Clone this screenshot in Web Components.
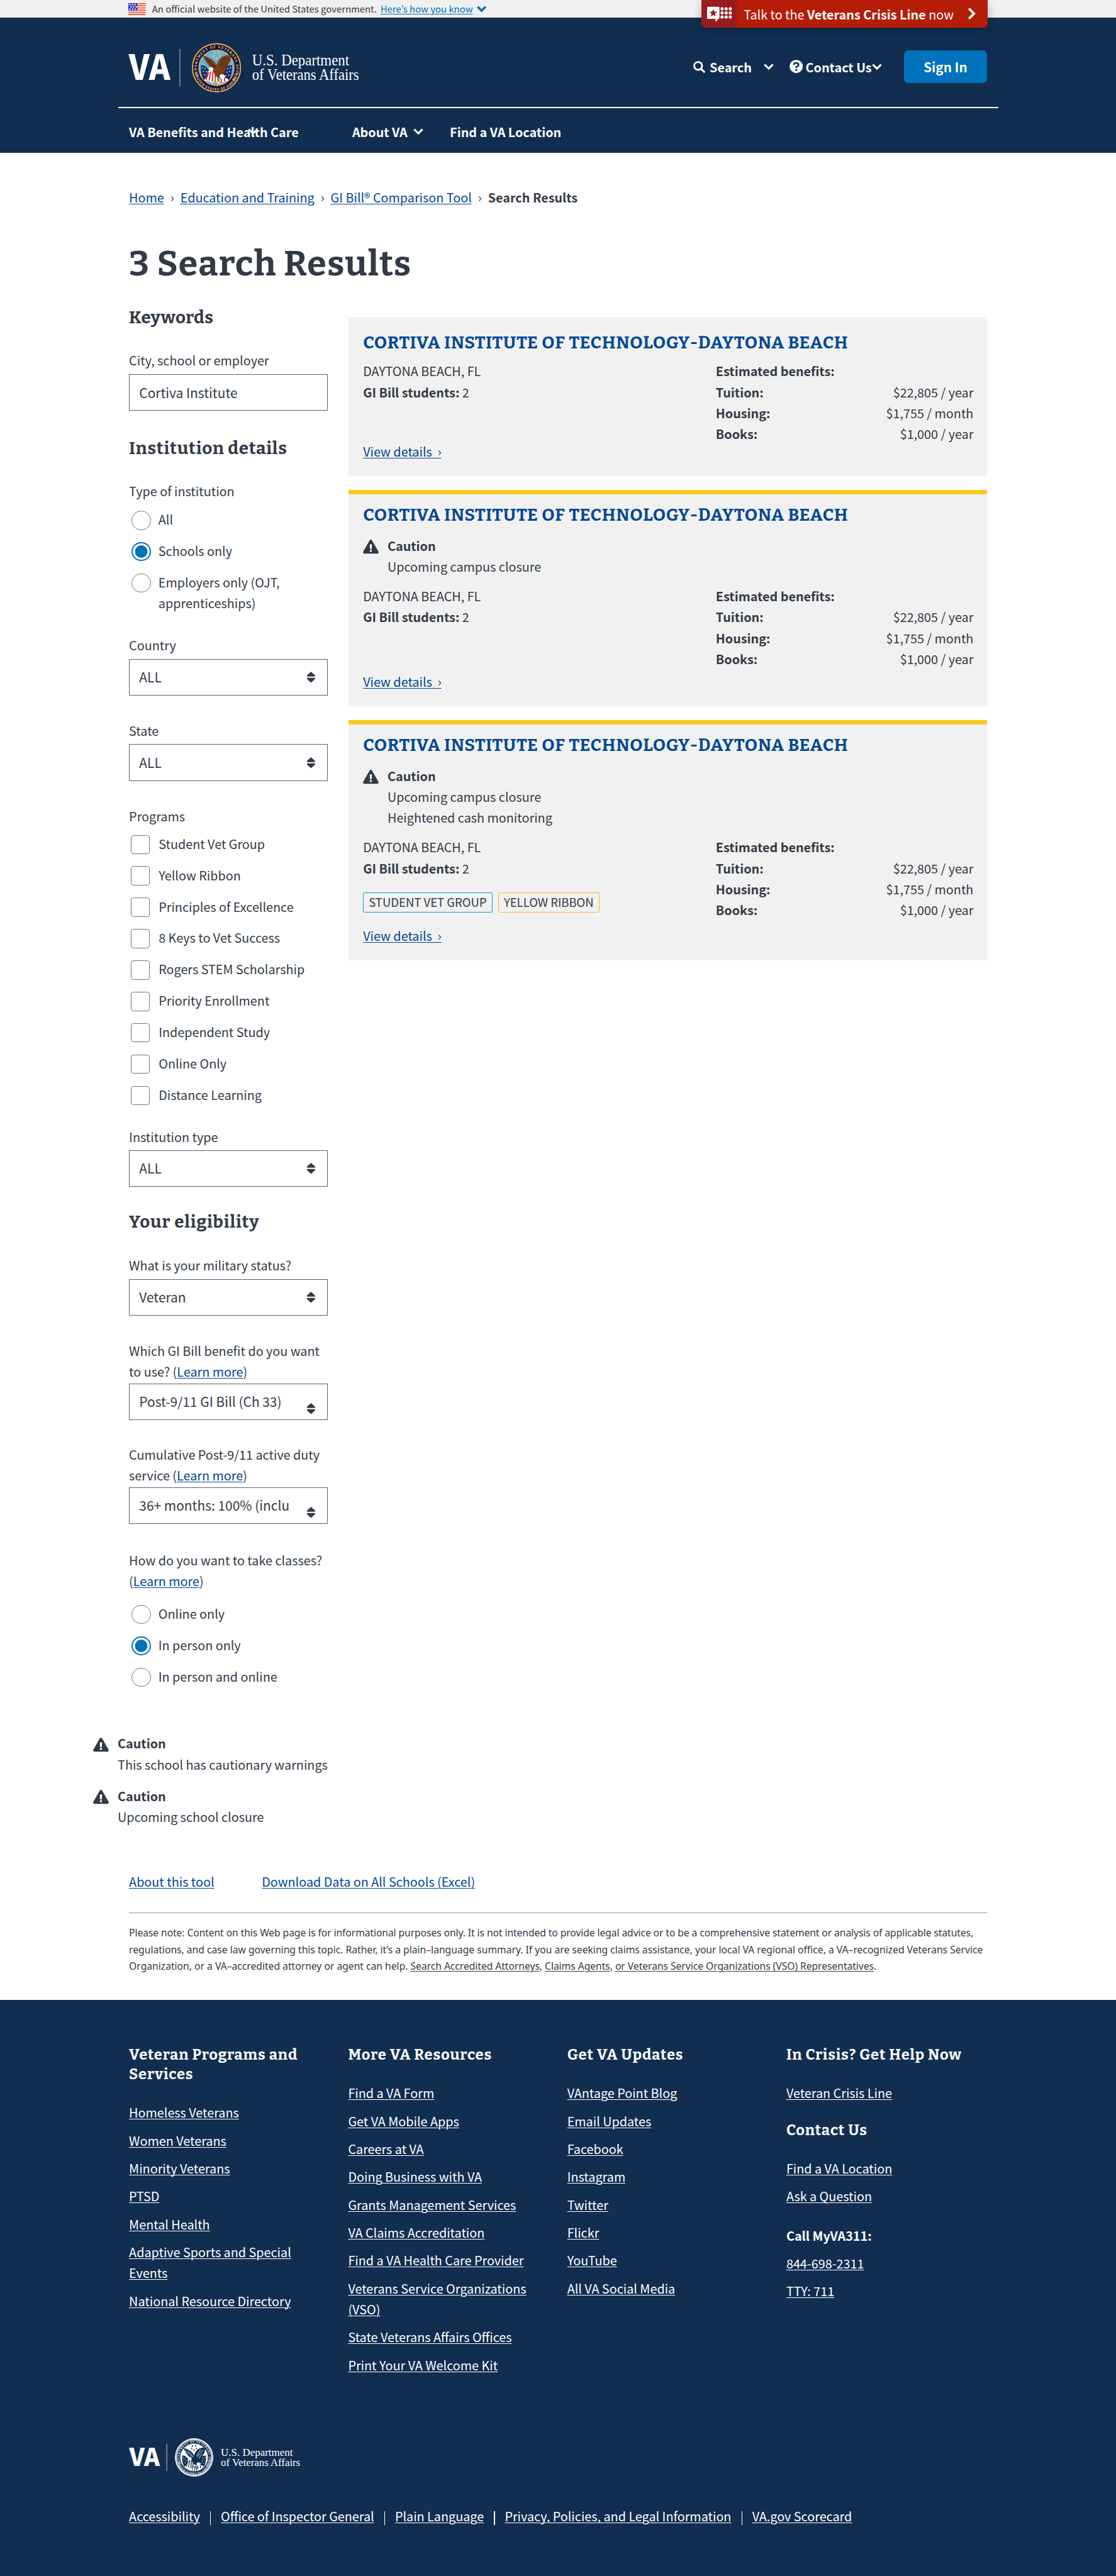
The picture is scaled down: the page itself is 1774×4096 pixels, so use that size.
<!DOCTYPE html>
<html lang="en">
<head>
<meta charset="utf-8">
<title>GI Bill Comparison Tool: Search Results</title>
<style>
  /* 1rem = 10 layout units */
  html{font-size:13.859px}
  body{margin:0;background:#fff;color:#323a45;height:4096px;overflow:hidden;
    font-family:"Noto Sans CJK JP","Noto Sans",sans-serif;font-size:1.428rem;line-height:2.4rem;
    --serif:"Bitter","DejaVu Serif Condensed",serif;--link:#004795;--navy:#112e51}
</style>
</head>
<body>
<va-page>
  <gov-banner slot="top"></gov-banner>
  <va-header slot="top"></va-header>
  <va-crumbs style="--mt:39"></va-crumbs>
  <va-title style="--mt:39">3 Search Results</va-title>
  <va-columns>
    <va-filters slot="side"></va-filters>
    <result-card gap="43.8"></result-card>
    <result-card warn gap="50">
      <caution-note slot="caution"><span>Upcoming campus closure</span></caution-note>
    </result-card>
    <result-card warn gap="13.9">
      <caution-note slot="caution"><span>Upcoming campus closure</span><span>Heightened cash monitoring</span></caution-note>
      <program-tag slot="tags" style="--c:#00a6d2">STUDENT VET GROUP</program-tag>
      <program-tag slot="tags" style="--c:#fdb81e">YELLOW RIBBON</program-tag>
    </result-card>
  </va-columns>
  <caution-note style="--mt:53;--ml:-41"><span>This school has cautionary warnings</span></caution-note>
  <caution-note style="--mt:12;--ml:-41"><span>Upcoming school closure</span></caution-note>
  <tool-links></tool-links>
  <legal-note></legal-note>
  <va-footer slot="bottom"></va-footer>
</va-page>

<script>
const u = n => `calc(${n} * .1rem)`;
const BASE = `
  *{box-sizing:border-box}
  :host{display:block;margin-top:calc(var(--mt,0)*.1rem)}
  a{color:var(--link);text-decoration:underline;text-decoration-thickness:.1rem;text-underline-offset:.14rem}
  svg{display:block;flex:none;overflow:visible}
  h1,h2,h3,p,ul{margin:0;padding:0;list-style:none}`;
function define(name, css, html) {
  customElements.define(name, class extends HTMLElement {
    constructor() {
      super();
      this.attachShadow({ mode: 'open' });
    }
    connectedCallback() {
      this.shadowRoot.innerHTML = `<style>${BASE}${css}</style>` + (typeof html === 'function' ? html(this) : html);
    }
  });
}
const svg = (w, h, body, extra = '') =>
  `<svg style="width:${w/10}rem;height:${h/10}rem" viewBox="0 0 ${w} ${h}" ${extra}>${body}</svg>`;
const chevron = (w, h, c, sw = 2.2) =>
  svg(w, h, `<path d="M1 1.2 ${w/2} ${h-1.6} ${w-1} 1.2" fill="none" stroke="${c}" stroke-width="${sw}"/>`);
const star = (x, y, r, c) => {
  let d = '';
  for (let i = 0; i < 10; i++) {
    const a = -Math.PI/2 + i*Math.PI/5, q = i % 2 ? r*.42 : r;
    d += (i ? 'L' : 'M') + (x + q*Math.cos(a)).toFixed(2) + ' ' + (y + q*Math.sin(a)).toFixed(2);
  }
  return `<path d="${d}Z" fill="${c}"/>`;
};

define('va-page', `
  main{padding-left:14.8rem;width:113.2rem}`,
  `<slot name="top"></slot><main><slot></slot></main><slot name="bottom"></slot>`);

define('gov-banner', `
  :host{height:2rem;background:#f0f0f0;position:relative;z-index:2}
  .row{display:flex;align-items:center;height:2rem;padding-left:14.75rem;font-size:1.075rem;line-height:2rem;white-space:nowrap}
  .flag{margin-right:.7rem}
  a{color:#0071bb;margin:0 .45rem 0 .42rem;text-underline-offset:.12rem}
  .crisis{position:absolute;left:80.43rem;top:0;width:32.83rem;height:3.2rem;display:flex;align-items:center;background:#b51d09;color:#fff;
    border-radius:0 0 .5rem .5rem;overflow:hidden;font-size:1.43rem;white-space:nowrap}
  .shadow{position:absolute;left:80.43rem;top:0;width:32.83rem;height:3.2rem;border-radius:.5rem;box-shadow:0 .5rem 1rem rgba(10,20,35,.3)}
  .mark{width:4.07rem;height:3.2rem;background:#981b1e;display:flex;padding:.75rem 0 0 .65rem}
  .txt{margin-left:.8rem;width:25.7rem;padding-top:.05rem}`,
  () => {
    let flag = '<rect width="20" height="13.5" fill="#fff"/>';
    for (let i = 0; i < 6; i++) flag += `<rect y="${i*2.46}" width="20" height="1.2" fill="#f43a10"/>`;
    flag += '<rect width="10.3" height="8.5" fill="#2a2fc2"/>';
    for (let r = 0; r < 3; r++) for (let c = 0; c < 3; c++)
      flag += `<rect x="${1 + c*3 + (r % 2)*1.4}" y="${.9 + r*2.6}" width="1.5" height="1.6" fill="#fff"/>`;
    let dots = '';
    for (let r = 0; r < 3; r++) for (let c = 0; c < 3; c++) dots += `<circle cx="${17.2 + c*4.7}" cy="${2.9 + r*4.7}" r="1.85"/>`;
    const mark = svg(29, 18.5, `<g fill="#fff"><path d="M1.2 .5H13Q14.2 .5 14.2 1.7V13Q14.2 13.5 13.4 14L9.6 18V14.5H1.2Q0 14.5 0 13.3V1.7Q0 .5 1.2 .5Z"/>${dots}</g>${star(7.1, 7.8, 4.9, '#981b1e')}`);
    return `<div class="row"><span class="flag">${svg(20, 13.5, flag)}</span><span>An official website of the United States government.</span><a>Here’s how you know</a>${chevron(11, 7.4, '#0071bb', 2.6)}</div>
      <div class="shadow"></div>
      <div class="crisis"><div class="mark">${mark}</div><div class="txt">Talk to the <b>Veterans Crisis Line</b> now</div>${
        svg(10, 14, '<path d="M1.6 1.2 7.4 7 1.6 12.8" fill="none" stroke="#fff" stroke-width="2.7"/>')}</div>`;
  });

/* Department seal, radius 28.7 about the origin */
function seal(mono) {
  const band = mono ? '#112e51' : '#1a1440', gold = mono ? '#fff' : '#e9bb3c', sky = mono ? '#fff' : '#63b3d6';
  const brown = mono ? '#112e51' : '#7a3f17', dark = mono ? '#fff' : '#4d230b', blue = mono ? '#112e51' : '#1d2c6b', red = mono ? '#112e51' : '#cf2030';
  const id = mono ? 'm' : 'c';
  let s = `<circle r="28.6" fill="${mono ? '#fff' : '#15103a'}"/><circle r="27.6" fill="${band}" stroke="${gold}" stroke-width="${mono ? 1 : 1.3}"/>`;
  if (mono) s += `<circle r="26.1" fill="none" stroke="#fff" stroke-width="1.8" stroke-dasharray="1.1 .5"/>`;
  s += `<circle r="20.3" fill="${sky}" stroke="${gold}" stroke-width=".9"/>`;
  s += `<path id="t${id}" d="M-18.6 14.5A23.6 23.6 0 1 1 18.6 14.5" fill="none" transform="scale(${mono ? .93 : .955})"/>
    <path id="b${id}" d="M-26.8 3A26.9 26.9 0 0 0 26.8 3" fill="none" transform="scale(${mono ? .93 : .955})"/>
    <g font-family="Liberation Serif,serif" font-weight="bold" font-size="4.3" fill="${mono ? '#fff' : '#e7d489'}">
    <text><textPath href="#t${id}" startOffset="5" textLength="98">DEPARTMENT OF VETERANS AFFAIRS</textPath></text>
    <text><textPath href="#b${id}" startOffset="4" textLength="69">UNITED STATES OF AMERICA</textPath></text></g>`;
  for (const [x, y] of [[-2.2,-17.2],[2.2,-17.2],[-3.6,-13.4],[3.6,-13.4],[0,-11]]) s += star(x, y, 1.7, mono ? '#112e51' : '#f6cf3a');
  // flags
  s += `<path d="M-17.6-6-8 15" stroke="${gold}" stroke-width=".8"/><path d="M17.6-6 8 15" stroke="${gold}" stroke-width=".8"/>`;
  s += `<path d="M-17.8-3Q-13-3-9 2L-8 11Q-12 10-14.5 14Q-18.5 8-17.8-3Z" fill="${blue}"/><path d="M17.8-3Q13-3 9 0L8 12Q12 11 14.5 14Q18.5 8 17.8-3Z" fill="${blue}"/>`;
  for (const [x, y] of [[-16,0],[-13,1],[-15,4],[-11.5,4.5],[-13.5,8],[-10.5,8],[16,0],[13,1],[15,4],[12,5],[14,8.5],[10.5,9]]) s += `<circle cx="${x}" cy="${y}" r=".65" fill="#fff"/>`;
  s += `<path d="M-10 4Q-5 1-2 6L2 17Q-2 14-5 18Q-9 14-14 15Q-10 10-10 4Z" fill="#fff"/><path d="M14 14Q10 10 5 12L0 17 3 19Q9 16 14 14Z" fill="#fff"/>`;
  s += `<path d="M-9 5-12 14M-6.6 3.6-8.4 14.6M-4 4-4.8 16M-1.4 7-1.6 15.6M1 13 4.6 17.6M5 12 6 17M9 11.6 9.6 15.6" stroke="${red}" stroke-width="1.3"/>`;
  s += `<path d="M-2 12-3 20M1 14 1 21M3 13 4 20" stroke="${mono ? '#112e51' : '#e7b52f'}" stroke-width=".9"/>`;
  // eagle
  s += `<path d="M3 12Q-4 8-4 2Q-10-2-16-14Q-11-13-8-11Q-3-9 0-3Q2-10 7-13Q12-15 16.5-15Q17-8 13-3Q10 2 9 5L8 10Q6 13 3 12Z" fill="${brown}"/>
    <path d="M-13-11Q-6-4-2 0M-9-9Q-4-4-1-1M14-12Q9-6 5-1M10-12Q6-7 4-2M12-5Q9-2 7 2" fill="none" stroke="${dark}" stroke-width=".8"/>
    <path d="M4 8Q8 6 10 10Q9 13 6 13Q3 12 4 8ZM-9 .5Q-6-2-3.5 1Q-4 4-7 4.5Z" fill="#fff"/>`;
  return `<g>${s}</g>`;
}

define('va-logo', ':host{font-weight:400}', el => {
  if (el.hasAttribute('footer'))
    return svg(200, 44, `<g fill="#fff"><text x=".3" y="31.9" font-family="Noto Sans CJK JP" font-weight="900" font-size="28.6" textLength="35" lengthAdjust="spacingAndGlyphs">VA</text>
      <rect x="43" y="6.2" width=".7" height="31.5" opacity=".75"/>
      <g font-family="Liberation Serif,serif" font-size="12.6"><text x="105.4" y="20" textLength="82.5" lengthAdjust="spacingAndGlyphs">U.S. Department</text><text x="105.4" y="32" textLength="91" lengthAdjust="spacingAndGlyphs">of Veterans Affairs</text></g></g>
      <g transform="translate(74.7 22) scale(.767)">${seal(true)}</g>`);
  return svg(270, 59, `<g fill="#fff"><text x="-.2" y="43.3" font-family="Noto Sans CJK JP" font-weight="900" font-size="39.3" textLength="47.5" lengthAdjust="spacingAndGlyphs">VA</text>
    <rect x="58" y="8" width=".8" height="43" opacity=".65"/>
    <g font-family="Liberation Serif,serif" font-size="17.6"><text x="141.3" y="26.7" textLength="111.3" lengthAdjust="spacingAndGlyphs">U.S. Department</text><text x="141.3" y="43.2" textLength="122.5" lengthAdjust="spacingAndGlyphs">of Veterans Affairs</text></g></g>
    <g transform="translate(100.4 29.4)">${seal(false)}</g>`);
});

define('va-header', `
  :host{background:var(--navy);height:15.5rem;color:#fff;font-weight:700}
  .top{display:flex;height:10.3rem;padding:2.8rem 0 0 14.8rem;width:113.2rem}
  .tools{display:flex;margin-left:auto;align-items:center;height:3.7rem;margin-top:1rem;white-space:nowrap}
  .tools span{line-height:2.4rem;padding-top:.1rem}
  .btn{display:flex;align-items:center;justify-content:center;width:9.51rem;height:3.7rem;border-radius:.5rem;background:#0071bb;font-size:1.49rem;margin-left:2.56rem}
  hr{border:0;margin:0 0 0 13.6rem;height:.1rem;width:100.9rem;background:#fff}
  nav{display:flex;height:5.1rem;padding:1.5rem 0 0 14.8rem;white-space:nowrap}
  nav div{position:relative;display:flex;align-items:center;height:2.4rem}
  .over{position:absolute;left:13.6rem;top:.85rem}`,
  `<div class="top"><va-logo></va-logo>
    <div class="tools">${svg(13.5, 13.5, '<g fill="none" stroke="#fff"><circle cx="5.6" cy="5.6" r="4.5" stroke-width="2"/><path d="M8.8 8.8 12.4 12.4" stroke-width="2.3" stroke-linecap="round"/></g>')}
      <span style="margin:0 1.4rem 0 .5rem">Search</span>${chevron(11.5, 7.4, '#fff')}
      <i style="width:1.8rem"></i>${svg(15.4, 15.4, '<circle cx="7.7" cy="7.7" r="7.6" fill="#fff"/><path d="M5 6Q5 3.6 7.7 3.6T10.4 6Q10.4 7.5 7.9 8.2V9.6" fill="none" stroke="#112e51" stroke-width="1.9"/><rect x="6.7" y="10.8" width="2.2" height="2" fill="#112e51"/>')}
      <span style="margin-left:.3rem">Contact Us</span>${chevron(11.5, 7.4, '#fff')}
      <div class="btn"><span>Sign In</span></div></div></div>
  <hr>
  <nav><div style="width:25.6rem">VA Benefits and Health Care<span class="over">${chevron(12, 7.4, '#fff')}</span></div>
    <div style="width:11.2rem">About VA<i style="width:.65rem"></i>${chevron(11.5, 7.4, '#fff')}</div><div>Find a VA Location</div></nav>`);

define('va-crumbs', `
  :host{display:flex;gap:.72rem;height:2.4rem;white-space:nowrap}`,
  `<a>Home</a><span>›</span><a>Education and Training</a><span>›</span><a>GI Bill® Comparison Tool</a><span>›</span><b>Search Results</b>`);

define('va-title', `
  h1{font:750 4rem/5.2rem var(--serif);letter-spacing:.09rem}`, `<h1><slot></slot></h1>`);

define('va-columns', `
  :host{display:flex}
  .side{width:25.2rem;flex:none}
  .list{flex:1;padding-top:3.5rem;display:flex;flex-direction:column;gap:1.6rem}`,
  `<div class="side"><slot name="side"></slot></div><div class="list"><slot></slot></div>`);

define('filter-heading', `h2{font:750 2rem/2.6rem var(--serif);letter-spacing:var(--ls,.053rem)}`, `<h2><slot></slot></h2>`);
define('field-label', `:host{width:23.4rem;white-space:nowrap}`, `<slot></slot>`);
define('text-box', `
  .b{width:22.8rem;height:4.2rem;border:.1rem solid #5b616b;display:flex;align-items:center;padding:.1rem 0 0 1.1rem;font-size:1.51rem}`,
  `<div class="b"><slot></slot></div>`);
define('select-box', `
  .b{width:22.8rem;height:4.2rem;border:.1rem solid #5b616b;display:flex;padding:.8rem 1.4rem 0 1.1rem;justify-content:space-between}
  .t{width:17.6rem;overflow:hidden;white-space:nowrap;font-size:1.51rem}
  svg{margin-top:calc(.6rem + var(--drop,0)*.1rem)}`,
  `<div class="b"><div class="t"><slot></slot></div>${svg(9.2, 12.6, '<path d="M4.6 0 9.2 4.2V5.6H0V4.2ZM4.6 12.6 9.2 8.4V7H0V8.4Z" fill="#323a45"/>')}</div>`);
define('choice-row', `
  :host{display:flex;margin-bottom:1.2rem}
  i{flex:none;width:2.2rem;height:2.2rem;margin:.22rem .92rem -.1rem .3rem;border:.1rem solid #757575;border-radius:50%}
  :host([check]) i{border-radius:.3rem;margin:.2rem 1rem 0 .2rem}
  :host([check]) i + span{margin-left:0}
  :host([on]) i{border:.2rem solid #0071bb;background:radial-gradient(circle,#0071bb .68rem,#fff .74rem)}
  span{margin-left:-.05rem;white-space:nowrap}`,
  `<i></i><span><slot></slot></span>`);

define('va-filters', `:host{padding-top:2.25rem}`, `
  <filter-heading style="--ls:.025rem">Keywords</filter-heading>
  <field-label style="--mt:23.7">City, school or employer</field-label>
  <text-box style="--mt:3.8">Cortiva Institute</text-box>
  <filter-heading style="--mt:30.3">Institution details</filter-heading>
  <field-label style="--mt:23.8">Type of institution</field-label>
  <choice-row style="--mt:8.7">All</choice-row>
  <choice-row on>Schools only</choice-row>
  <choice-row>Employers only (OJT,<br>apprenticeships)</choice-row>
  <field-label style="--mt:24.5">Country</field-label>
  <select-box style="--mt:3.7">ALL</select-box>
  <field-label style="--mt:28">State</field-label>
  <select-box style="--mt:4">ALL</select-box>
  <field-label style="--mt:28.2">Programs</field-label>
  <choice-row check style="--mt:7.8">Student Vet Group</choice-row>
  ${['Yellow Ribbon','Principles of Excellence','8 Keys to Vet Success','Rogers STEM Scholarship','Priority Enrollment','Independent Study','Online Only','Distance Learning'].map(t => `<choice-row check>${t}</choice-row>`).join('')}
  <field-label style="--mt:24.1">Institution type</field-label>
  <select-box style="--mt:3.4">ALL</select-box>
  <filter-heading style="--mt:27.9;--ls:.062rem">Your eligibility</filter-heading>
  <field-label style="--mt:24.3">What is your military status?</field-label>
  <select-box style="--mt:3.8">Veteran</select-box>
  <field-label style="--mt:28.1">Which GI Bill benefit do you want<br>to use? (<a>Learn more</a>)</field-label>
  <select-box style="--mt:1.9;--drop:8">Post-9/11 GI Bill (Ch 33)</select-box>
  <field-label style="--mt:27.3">Cumulative Post-9/11 active duty<br>service (<a>Learn more</a>)</field-label>
  <select-box style="--mt:1.7;--drop:8">36+ months: 100% (inclu</select-box>
  <field-label style="--mt:29.3">How do you want to take classes?<br>(<a>Learn more</a>)</field-label>
  <choice-row style="--mt:13.5">Online only</choice-row>
  <choice-row on>In person only</choice-row>
  <choice-row style="margin-bottom:0">In person and online</choice-row>`);

define('caution-note', `
  :host{display:flex;margin-left:calc(var(--ml,0)*.1rem)}
  svg{margin:.53rem 1rem 0 0}
  .t{display:flex;flex-direction:column;white-space:nowrap}`,
  `${svg(18, 16, '<path fill="#323a45" d="M9 0Q9.9 0 10.4 .9L17.7 13.7Q18.3 14.7 17.7 15.3Q17.4 16 16.5 16H1.5Q.6 16 .3 15.3Q-.2 14.6 .3 13.7L7.6 .9Q8.1 0 9 0Z"/><path fill="var(--hole,#fff)" d="M7.7 5.4H10.3L10 11H8Z"/><circle cx="9" cy="13" r="1.3" fill="var(--hole,#fff)"/>')}
   <div class="t"><b>Caution</b><slot></slot></div>`);

define('program-tag', `
  :host{border:.1rem solid var(--c);border-radius:.2rem;height:2.2rem;padding:0 .58rem;font-size:1.335rem;line-height:2.1rem;white-space:nowrap}`,
  `<slot></slot>`);

define('result-card', `
  :host{background:#f1f1f1;padding:1.63rem 1.55rem 1.65rem 1.65rem;--hole:#f1f1f1}
  :host([warn]){border-top:7px solid #fac922;padding-top:1.1rem}
  h3{font:750 2rem/2.6rem var(--serif);letter-spacing:.051rem;color:var(--link);white-space:nowrap;margin-bottom:.75rem}
  :host([warn]) h3{margin-bottom:.97rem}
  .c::slotted(*){margin-bottom:1rem}
  .grid{display:grid;grid-template-columns:40.45rem 1fr}
  .left{display:flex;flex-direction:column;align-items:flex-start}
  .tags{display:flex;gap:.67rem}
  .tags.on{margin-top:1.58rem}
  .right p{display:flex;justify-content:space-between}`,
  el => `<h3>CORTIVA INSTITUTE OF TECHNOLOGY-DAYTONA BEACH</h3><slot class="c" name="caution"></slot>
   <div class="grid"><div class="left"><span>DAYTONA BEACH, FL</span><span><b>GI Bill students:</b> 2</span>
     <div class="tags ${el.querySelector('program-tag') ? 'on' : ''}"><slot name="tags"></slot></div>
     <a style="margin-top:${u(el.getAttribute('gap'))}">View details&nbsp; ›</a></div>
   <div class="right"><b>Estimated benefits:</b>
     <p><b>Tuition:</b><span>$22,805 / year</span></p><p><b>Housing:</b><span>$1,755 / month</span></p><p><b>Books:</b><span>$1,000 / year</span></p></div></div>`);

define('tool-links', `:host{display:flex;padding-top:5.02rem}`,
  `<a style="width:15.23rem;display:block">About this tool</a><a>Download Data on All Schools (Excel)</a>`);

define('legal-note', `
  :host{margin-top:2.42rem;border-top:.1rem solid #999;padding-top:1.3rem;font:1.131rem/1.9rem "Noto Sans",sans-serif;white-space:nowrap}
  a{color:inherit}
  .n{letter-spacing:-.0061rem}`,
  `<span class="n">Please note: Content on this Web page is for informational purposes only. It is not intended to provide legal advice or to be a comprehensive statement or analysis of applicable statutes,</span><br>
   regulations, and case law governing this topic. Rather, it’s a plain–language summary. If you are seeking claims assistance, your local VA regional office, a VA–recognized Veterans Service<br>
   Organization, or a VA–accredited attorney or agent can help. <span style="letter-spacing:-.003rem"><a>Search Accredited Attorneys</a>, <a>Claims Agents</a>, <a>or Veterans Service Organizations (VSO) Representatives</a>.</span>`);

define('link-column', `
  :host{width:25.13rem;padding-right:3.5rem}
  h3{font:750 1.71rem/2.24rem var(--serif);letter-spacing:.062rem;margin-right:-1rem}
  a{color:#fff}
  li{margin-bottom:.8rem}
  ul{margin:2.05rem 0 0}
  ul + h3{margin-top:1.95rem}
  ul + b{display:block;margin:2.08rem 0 -1.25rem}`,
  el => JSON.parse(el.getAttribute('groups')).map(([h, links]) =>
    (h.endsWith(':') ? `<b>${h}</b>` : `<h3>${h}</h3>`) + `<ul>${links.map(l => `<li><a>${l}</a></li>`).join('')}</ul>`).join(''));

const COLS = [
  [['Veteran Programs and Services', ['Homeless Veterans','Women Veterans','Minority Veterans','PTSD','Mental Health','Adaptive Sports and Special Events','National Resource Directory']]],
  [['More VA Resources', ['Find a VA Form','Get VA Mobile Apps','Careers at VA','Doing Business with VA','Grants Management Services','VA Claims Accreditation','Find a VA Health Care Provider','Veterans Service Organizations (VSO)','State Veterans Affairs Offices','Print Your VA Welcome Kit']]],
  [['Get VA Updates', ['VAntage Point Blog','Email Updates','Facebook','Instagram','Twitter','Flickr','YouTube','All VA Social Media']]],
  [['In Crisis? Get Help Now', ['Veteran Crisis Line']],['Contact Us', ['Find a VA Location','Ask a Question']],['Call MyVA311:', ['844-698-2311','TTY: 711']]]
];
define('va-footer', `
  :host{margin-top:2.92rem;background:var(--navy);color:#fff;padding:5.2rem 0 20rem 14.8rem}
  .cols{display:flex;height:45.1rem}
  .links{display:flex;align-items:center;margin-top:3.35rem;white-space:nowrap}
  .links a{color:#fff}
  .links i{width:.1rem;height:1.6rem;background:#fff;margin:.4rem 1.14rem 0 1.16rem}`,
  `<div class="cols">${COLS.map(c => `<link-column groups='${JSON.stringify(c)}'></link-column>`).join('')}</div>
   <va-logo footer></va-logo>
   <div class="links">${['Accessibility','Office of Inspector General','Plain Language','Privacy, Policies, and Legal Information','VA.gov Scorecard'].map(t => `<a>${t}</a>`).join('<i></i>')}</div>`);
</script>
</body>
</html>
